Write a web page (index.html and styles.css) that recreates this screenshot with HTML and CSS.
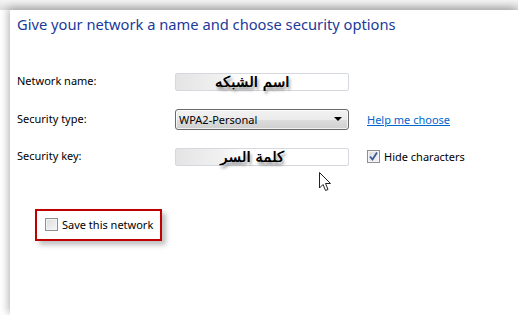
FILE: index.html
```html
<!DOCTYPE html>
<html>
<head>
<meta charset="utf-8">
<link rel="stylesheet" href="styles.css">
</head>
<body>
<div class="panel">
  <h1 class="title">Give your network a name and choose security options</h1>
  <div class="form">
    <div class="label">Network name:</div>
    <div class="field"><span class="ar">اسم الشبكه</span></div>
    <div class="extra"></div>

    <div class="label">Security type:</div>
    <div class="select"><span>WPA2-Personal</span><span class="arrow"></span></div>
    <div class="extra"><a class="link" href="#">Help me choose</a></div>

    <div class="label">Security key:</div>
    <div class="field"><span class="ar">كلمة السر</span>
      <svg class="cursor" width="14" height="21" viewBox="0 0 14 21"><path d="M0.5 0.5 L0.5 16 L4 12.5 L6.5 18.5 L9 17.5 L6.5 11.5 L11.5 11.5 Z" fill="#fff" stroke="#222" stroke-width="1"/></svg>
    </div>
    <div class="extra"><label class="check"><span class="box checked"><svg width="11" height="11" viewBox="0 0 11 11"><path d="M2 5.5 L4.5 8.5 L9 1.5" fill="none" stroke="#3a5a9a" stroke-width="1.8"/></svg></span>Hide characters</label></div>
  </div>
  <div class="save">
    <label class="check"><span class="box"></span>Save this network</label>
  </div>
</div>
</body>
</html>
```

FILE: styles.css
```css
html, body {
  margin: 0;
  padding: 0;
  height: 100%;
  overflow: hidden;
}
body {
  font-family: "Noto Sans", "Liberation Sans", sans-serif;
  background: linear-gradient(to bottom, #f4f4f4, #dcdcdc 10px, #fff 10px);
}
.panel {
  margin: 10px 0 0 10px;
  height: 305px;
  background: #fff;
  box-shadow: -2px -2px 8px rgba(0,0,0,0.28);
  padding: 4px 0 0 7px;
  box-sizing: border-box;
}
.title {
  margin: 0;
  font-weight: normal;
  font-size: 14.7px;
  line-height: 20px;
  color: #1b3a9a;
}
.form {
  margin-top: 29px;
  display: grid;
  grid-template-columns: 140px 174px auto;
  grid-auto-rows: 37.5px;
  column-gap: 18px;
  align-items: center;
  font-size: 11px;
  color: #000;
}
.label {
  align-self: center;
  margin-top: -2px;
}
.field {
  position: relative;
  height: 18px;
  box-sizing: border-box;
  border: 1px solid #d5d9de;
  border-radius: 2px;
  background: linear-gradient(to right, #e4e4e4, #f0f0f0 25%, #fff 40%);
  display: flex;
  justify-content: center;
  align-items: center;
}
.ar {
  font-family: "DejaVu Sans", sans-serif;
  font-weight: normal;
  font-size: 15px;
  line-height: 14px;
  direction: rtl;
  color: #000;
  text-shadow: 0.4px 0 0 #000, 2px 3px 3px rgba(0,0,0,0.5);
  margin-left: -20px;
  white-space: nowrap;
}
.cursor {
  position: absolute;
  left: 143px;
  top: 23px;
}
.select {
  height: 21px;
  box-sizing: border-box;
  border: 1px solid #6a6a6a;
  border-radius: 3px;
  background: linear-gradient(to bottom, #f2f2f2 0%, #ebebeb 50%, #dddddd 51%, #cfcfcf 100%);
  display: flex;
  align-items: center;
  justify-content: space-between;
  padding: 0 6px 0 3px;
  box-shadow: inset 0 0 0 1px rgba(255,255,255,0.7);
}
.arrow {
  width: 0;
  height: 0;
  border-left: 4px solid transparent;
  border-right: 4px solid transparent;
  border-top: 4px solid #000;
}
.link {
  color: #0066cc;
  text-decoration: underline;
  margin-top: -6px;
  display: inline-block;
}
.check {
  display: flex;
  align-items: center;
  gap: 4px;
  white-space: nowrap;
}
.box {
  width: 13px;
  height: 13px;
  box-sizing: border-box;
  border: 1px solid #8f8f8f;
  background: linear-gradient(135deg, #dcdcdc, #f6f6f6);
  display: flex;
  align-items: center;
  justify-content: center;
  box-shadow: inset 0 0 0 1px #f4f4f4;
}
.save {
  margin: 33px 0 0 18px;
  width: 127px;
  height: 32px;
  box-sizing: border-box;
  border: 2px solid #c00000;
  padding-left: 8px;
  display: flex;
  align-items: center;
  font-size: 11px;
  box-shadow: 4px 4px 5px rgba(0,0,0,0.25);
}
```
